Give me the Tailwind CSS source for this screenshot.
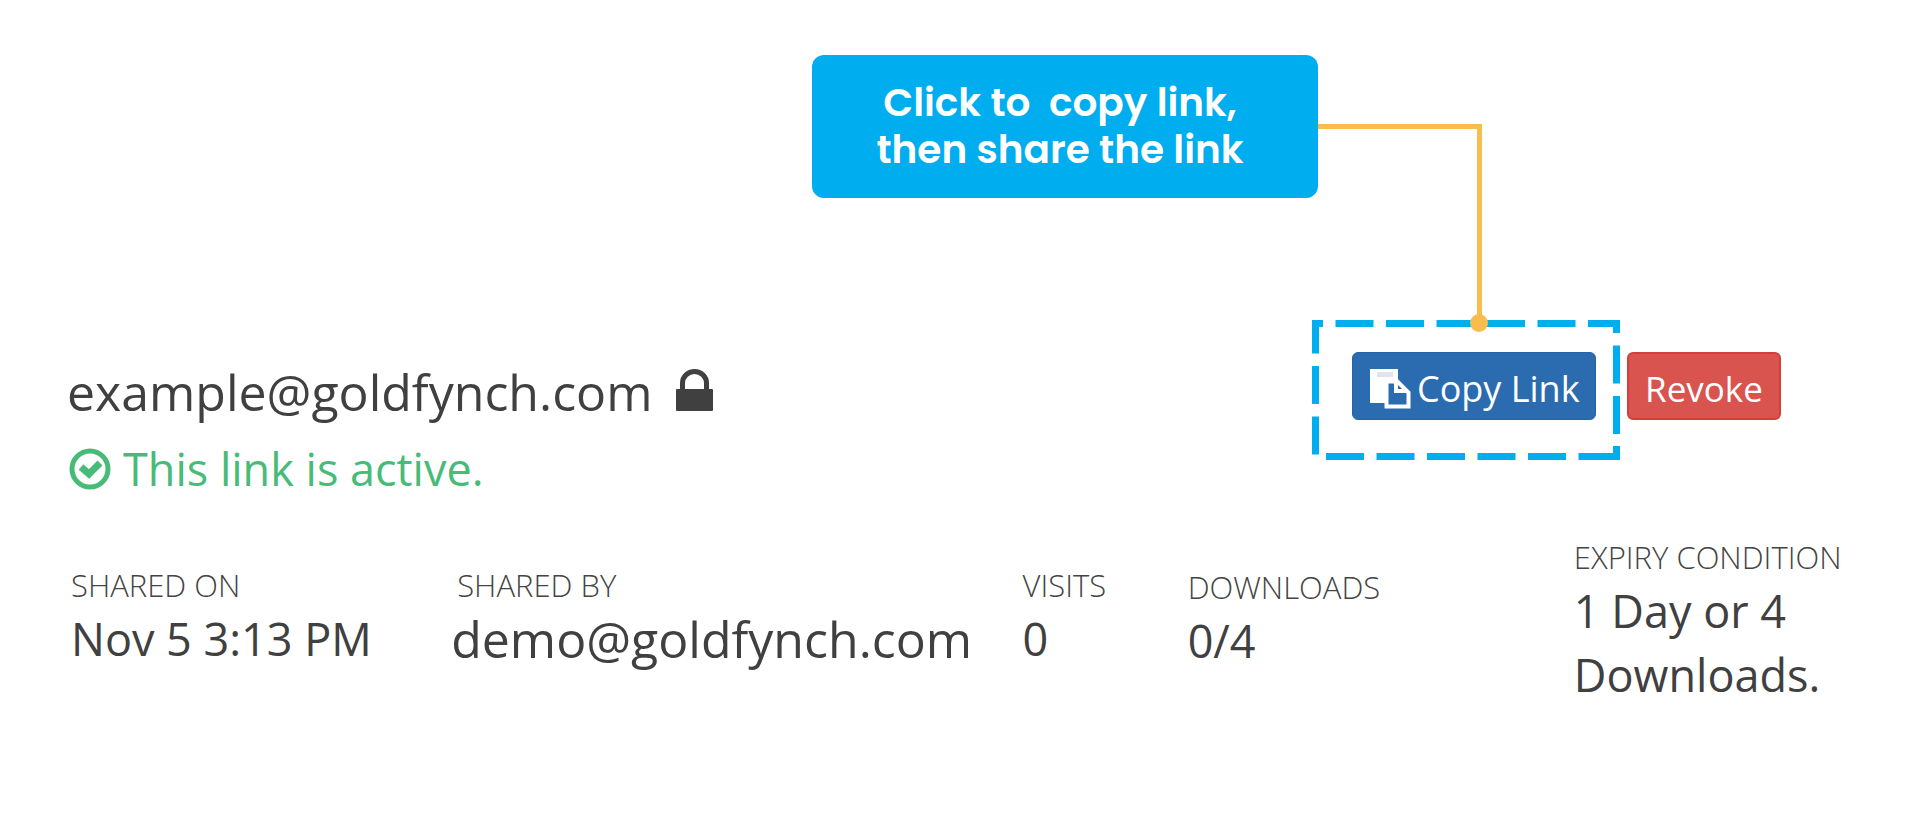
<!DOCTYPE html>
<html lang="en">

<head>
    <meta charset="UTF-8">
    <meta name="viewport" content="width=device-width,initial-scale=1.0">
    <script src="https://cdn.jsdelivr.net/npm/@tailwindcss/browser@4"></script>
    <title>Shared Link</title>
</head>

<body class="bg-white min-h-screen text-[#404040] font-['Open_Sans','Noto_Sans',sans-serif]">
    <main class="pt-[352px] pl-[67px] pr-[72px]">
        <!-- Recipient and actions -->
        <header class="flex items-start justify-between pr-[67px]">
            <div>
                <h1 class="flex items-center gap-6 text-[50px] leading-[80px]">
                    example@goldfynch.com
                    <svg class="w-[37px] h-[42px] -mt-1" viewBox="0 0 37 42" fill="none" aria-label="Locked">
                        <rect y="20" width="37" height="22" rx="1" fill="#404040" />
                        <path d="M6.500 22V14a12 11.500 0 0 1 24 0v8" stroke="#404040" stroke-width="5" />
                    </svg>
                </h1>
                <p class="flex items-center gap-3 pl-0.5 text-[45px] leading-[74px] text-[#48bb78]">
                    <svg class="w-[42px] h-[42px]" viewBox="0 0 42 42" fill="none" aria-hidden="true">
                        <circle cx="21" cy="21" r="18" stroke="currentColor" stroke-width="5" />
                        <path d="M12 19l8 7 11-11" stroke="currentColor" stroke-width="7" />
                    </svg>
                    This link is active.
                </p>
            </div>

            <div class="flex gap-[31px]">
                <div class="relative">
                    <button type="button"
                        class="flex items-center gap-1.5 h-[68px] w-[244px] px-4 pt-1.5 rounded-md border border-[#2565a5] bg-[#2b6cb0] text-white text-[36px] whitespace-nowrap">
                        <svg class="w-[42px] h-10 shrink-0" viewBox="0 0 42 40" aria-hidden="true">
                            <path d="M1 0h28v34H1z" fill="#fff" />
                            <path d="M8 3h16v5H8z" fill="#dbe5f3" />
                            <path d="M17.500 12.500h11l11 11v14h-22z" fill="#2b6cb0" stroke="#fff" stroke-width="4" />
                            <path d="M25 11v13h15z" fill="#fff" />
                            <path d="M29 16v4h4z" fill="#2b6cb0" />
                        </svg>
                        Copy Link
                    </button>

                    <!-- Highlight frame -->
                    <svg class="absolute -top-8 -left-10 w-[308px] h-[140px] max-w-none pointer-events-none" viewBox="0 0 308 140"
                        fill="none" stroke="#00aeef" stroke-width="7" aria-hidden="true">
                        <path d="M3.500 33.500V3.500h7.500" />
                        <path d="M23.500 3.500H277" stroke-dasharray="38 12.500" />
                        <path d="M276 3.500h28.500v9.500" />
                        <path d="M304.500 25.500v90" stroke-dasharray="38 12.500" />
                        <path d="M304.500 126v10.500H266.500" />
                        <path d="M254 136.500H14" stroke-dasharray="38 12.500" />
                        <path d="M3.500 134.500V40" stroke-dasharray="38 12.500" />
                    </svg>

                    <!-- Callout and its connector -->
                    <p class="absolute -top-[297px] right-[278px] w-[506px] pt-6 pb-[25px] pr-2.5 rounded-xl bg-[#00aeef] text-white text-center text-[39px] leading-[47px] font-semibold font-['Poppins','Inter',sans-serif] whitespace-nowrap">
                        Click to &nbsp;copy link,<br>then share the link
                    </p>
                    <div class="absolute -top-[228px] -left-[34px] w-[164px] h-[200px] border-t-5 border-r-5 border-[#f9bc4d]"></div>
                    <div class="absolute -top-[38px] left-[118px] size-[18px] rounded-full bg-[#f9bc4d]"></div>
                </div>
                <button type="button"
                    class="h-[68px] w-[154px] pt-1.5 rounded-md border-2 border-[#d33f3c] bg-[#d9534f] text-white text-[35px]">Revoke</button>
            </div>
        </header>

        <!-- Share details -->
        <dl class="mt-[30px] grid grid-cols-[384fr_571fr_165fr_386fr_274fr] items-start text-[45px] leading-[64px]">
            <div class="pl-1 pt-7">
                <dt class="text-[31px] leading-[43px] font-light text-[#444]">SHARED ON</dt>
                <dd>Nov 5 3:13 PM</dd>
            </div>
            <div class="pt-7">
                <dt class="pl-1.5 text-[31px] leading-[43px] font-light text-[#444]">SHARED BY</dt>
                <dd class="text-[50px]">demo@goldfynch.com</dd>
            </div>
            <div class="pt-7">
                <dt class="text-[31px] leading-[43px] font-light text-[#444]">VISITS</dt>
                <dd>0</dd>
            </div>
            <div class="pt-[30px]">
                <dt class="text-[31px] leading-[43px] font-light text-[#444]">DOWNLOADS</dt>
                <dd>0/4</dd>
            </div>
            <div>
                <dt class="text-[31px] leading-[43px] font-light text-[#444] whitespace-nowrap">EXPIRY CONDITION</dt>
                <dd>1 Day or 4 Downloads.</dd>
            </div>
        </dl>
    </main>
</body>

</html>
